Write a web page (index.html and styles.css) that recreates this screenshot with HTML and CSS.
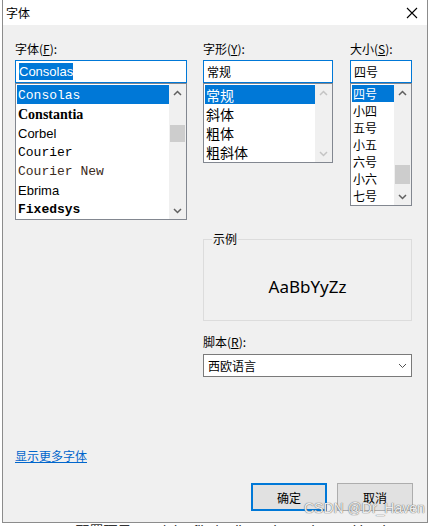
FILE: index.html
```html
<!DOCTYPE html>
<html lang="zh-CN">
<head>
    <meta charset="UTF-8">
    <title>字体</title>
    <link rel="stylesheet" href="styles.css">
</head>
<body>
    <div class="window">
        <div class="titlebar">
            <span class="title">字体</span>
            <svg class="close" width="12" height="12" viewBox="0 0 12 12">
                <path d="M1 1 L11 11 M11 1 L1 11" stroke="#000" stroke-width="1.1" fill="none"/>
            </svg>
        </div>

        <div class="content">
            <div class="pickers">
                <div class="col col-font">
                    <label class="lbl">字体(<u>F</u>):</label>
                    <div class="edit"><span class="sel-text">Consolas</span></div>
                    <div class="listbox font-list">
                        <ul class="items">
                            <li class="selected f-consolas">Consolas</li>
                            <li class="f-constantia">Constantia</li>
                            <li class="f-corbel">Corbel</li>
                            <li class="f-courier">Courier</li>
                            <li class="f-courier-new">Courier New</li>
                            <li class="f-ebrima">Ebrima</li>
                            <li class="f-fixedsys">Fixedsys</li>
                        </ul>
                        <div class="scrollbar">
                            <div class="arrow">
                                <svg width="9" height="6" viewBox="0 0 9 6"><path d="M1 5 L4.5 1.5 L8 5" stroke="#606060" stroke-width="1.5" fill="none"/></svg>
                            </div>
                            <div class="thumb font-thumb"></div>
                            <div class="arrow arrow-down">
                                <svg width="9" height="6" viewBox="0 0 9 6"><path d="M1 1 L4.5 4.5 L8 1" stroke="#606060" stroke-width="1.5" fill="none"/></svg>
                            </div>
                        </div>
                    </div>
                </div>

                <div class="col col-style">
                    <label class="lbl">字形(<u>Y</u>):</label>
                    <div class="edit"><span>常规</span></div>
                    <div class="listbox style-list">
                        <ul class="items">
                            <li class="selected">常规</li>
                            <li>斜体</li>
                            <li>粗体</li>
                            <li>粗斜体</li>
                        </ul>
                        <div class="scrollbar">
                            <div class="arrow">
                                <svg width="9" height="6" viewBox="0 0 9 6"><path d="M1 5 L4.5 1.5 L8 5" stroke="#c4c4c4" stroke-width="1.5" fill="none"/></svg>
                            </div>
                            <div class="arrow arrow-down">
                                <svg width="9" height="6" viewBox="0 0 9 6"><path d="M1 1 L4.5 4.5 L8 1" stroke="#c4c4c4" stroke-width="1.5" fill="none"/></svg>
                            </div>
                        </div>
                    </div>
                </div>

                <div class="col col-size">
                    <label class="lbl">大小(<u>S</u>):</label>
                    <div class="edit"><span>四号</span></div>
                    <div class="listbox size-list">
                        <ul class="items">
                            <li class="selected">四号</li>
                            <li>小四</li>
                            <li>五号</li>
                            <li>小五</li>
                            <li>六号</li>
                            <li>小六</li>
                            <li>七号</li>
                        </ul>
                        <div class="scrollbar">
                            <div class="arrow">
                                <svg width="9" height="6" viewBox="0 0 9 6"><path d="M1 5 L4.5 1.5 L8 5" stroke="#606060" stroke-width="1.5" fill="none"/></svg>
                            </div>
                            <div class="thumb size-thumb"></div>
                            <div class="arrow arrow-down">
                                <svg width="9" height="6" viewBox="0 0 9 6"><path d="M1 1 L4.5 4.5 L8 1" stroke="#606060" stroke-width="1.5" fill="none"/></svg>
                            </div>
                        </div>
                    </div>
                </div>
            </div>

            <div class="lower">
                <fieldset class="sample">
                    <legend>示例</legend>
                    <div class="sample-text">AaBbYyZz</div>
                </fieldset>
                <label class="lbl script-lbl">脚本(<u>R</u>):</label>
                <div class="combo">
                    <span>西欧语言</span>
                    <svg width="9" height="6" viewBox="0 0 9 6"><path d="M1 1 L4.5 4.5 L8 1" stroke="#505050" stroke-width="1" fill="none"/></svg>
                </div>
            </div>

            <a class="more-link" href="#">显示更多字体</a>

            <div class="buttons">
                <button class="btn btn-default">确定</button>
                <button class="btn">取消</button>
            </div>
        </div>

        <div class="watermark">CSDN @Dr_Haven</div>
    </div>

    <div class="behind">ASCII&nbsp;&nbsp;&nbsp;&nbsp;&nbsp;&nbsp;&nbsp;&nbsp;&nbsp;配置项目&nbsp;&nbsp;&nbsp;&nbsp;&nbsp;&nbsp;&nbsp;&nbsp;| the file | editor tab text is used by the</div>
</body>
</html>
```

FILE: styles.css
```css
body {
    margin: 0;
    background: #ffffff;
    font-family: "Noto Sans CJK SC", "Liberation Sans", sans-serif;
    font-size: 12px;
    color: #000;
    overflow: hidden;
}

.window {
    position: relative;
    width: 426px;
    height: 523px;
    margin-left: 2px;
    box-sizing: border-box;
    border: 1px solid #8c8c8c;
    border-top: none;
    background: #f0f0f0;
}

.titlebar {
    display: flex;
    align-items: center;
    justify-content: space-between;
    height: 25px;
    padding: 0 9px 0 3px;
    background: #ffffff;
}
.title {
    font-size: 12px;
    line-height: 16px;
}
.close {
    display: block;
}

.content {
    padding: 16px 14px 0 12px;
}

.pickers {
    display: flex;
}
.col-font {
    width: 172px;
    margin-right: 16px;
}
.col-style {
    width: 130px;
    margin-right: 17px;
}
.col-size {
    width: 62px;
}

.lbl {
    display: block;
    line-height: 16px;
    margin-bottom: 3px;
}

.edit {
    height: 23px;
    box-sizing: border-box;
    border: 1px solid #0078d7;
    background: #fff;
    padding-left: 3px;
    display: flex;
    align-items: center;
    font-size: 12px;
}
.sel-text {
    background: #0078d7;
    color: #fff;
    font-family: "Liberation Sans", sans-serif;
    font-size: 13px;
    line-height: 17px;
}

.listbox {
    display: flex;
    box-sizing: border-box;
    border: 1px solid #828790;
    background: #fff;
    padding: 1px 0 1px 1px;
}
.font-list {
    height: 137px;
}
.size-list {
    height: 123px;
}

.items {
    flex: 1;
    list-style: none;
    margin: 0;
    padding: 0;
    overflow: hidden;
}
.items li {
    height: 19px;
    line-height: 19px;
    padding-left: 1px;
    white-space: nowrap;
    overflow: hidden;
}
.items li.selected {
    background: #0078d7;
    color: #fff;
}

.font-list .items li {
    line-height: 22px;
}
.style-list .items li {
    font-size: 14px;
    line-height: 20px;
}
.size-list .items li {
    height: 17px;
    line-height: 17px;
}

.f-consolas,
.f-courier,
.f-courier-new {
    font-family: "Liberation Mono", monospace;
    font-size: 13px;
}
.f-courier-new {
    color: #3a2a20;
}
.f-constantia {
    font-family: "Liberation Serif", serif;
    font-weight: bold;
    font-size: 14px;
}
.f-corbel,
.f-ebrima {
    font-family: "Liberation Sans", sans-serif;
    font-size: 13px;
}
.f-fixedsys {
    font-family: "Liberation Mono", monospace;
    font-weight: bold;
    font-size: 13px;
}

.scrollbar {
    width: 17px;
    margin-top: -1px;
    margin-bottom: -1px;
    background: #f0f0f0;
    display: flex;
    flex-direction: column;
}
.arrow {
    height: 17px;
    display: flex;
    align-items: center;
    justify-content: center;
}
.arrow-down {
    margin-top: auto;
}
.thumb {
    margin: 0 1px;
    background: #cdcdcd;
}
.font-thumb {
    margin-top: 24px;
    height: 17px;
}
.size-thumb {
    margin-top: 64px;
    height: 19px;
}

.lower {
    width: 209px;
    margin-left: 188px;
    margin-top: 12px;
}

.sample {
    margin: 0;
    padding: 0;
    border: 1px solid #dcdcdc;
    min-width: 0;
}
.sample legend {
    margin-left: 8px;
    padding: 0 1px;
    line-height: 14px;
    font-size: 12px;
}
.sample-text {
    height: 74px;
    box-sizing: border-box;
    padding-top: 30px;
    text-align: center;
    font-family: "Noto Sans", sans-serif;
    font-size: 17px;
    line-height: 22px;
}

.script-lbl {
    margin-top: 13px;
    margin-bottom: 4px;
}

.combo {
    height: 23px;
    box-sizing: border-box;
    border: 1px solid #7a7a7a;
    background: #fff;
    display: flex;
    align-items: center;
    justify-content: space-between;
    padding: 0 4px 0 4px;
}

.more-link {
    display: inline-block;
    margin-top: 71px;
    line-height: 16px;
    color: #0066cc;
    text-decoration: underline;
}

.buttons {
    display: flex;
    justify-content: flex-end;
    gap: 10px;
    margin-top: 19px;
}
.btn {
    width: 76px;
    height: 28px;
    box-sizing: border-box;
    border: 1px solid #adadad;
    background: #e1e1e1;
    font-family: "Noto Sans CJK SC", sans-serif;
    font-size: 12px;
    color: #000;
    padding: 0;
}
.btn-default {
    border: 2px solid #0078d7;
}

.watermark {
    position: absolute;
    left: 301px;
    top: 500px;
    font-family: "Liberation Sans", sans-serif;
    font-size: 14px;
    color: rgba(255, 255, 255, 0.9);
    text-shadow: 0 0 1px #6a6a6a, 0 0 1px #6a6a6a;
}

.behind {
    padding-left: 4px;
    font-family: "Liberation Sans", "Noto Sans CJK SC", sans-serif;
    font-size: 14px;
    line-height: 16px;
    color: #333;
    white-space: nowrap;
}
```
